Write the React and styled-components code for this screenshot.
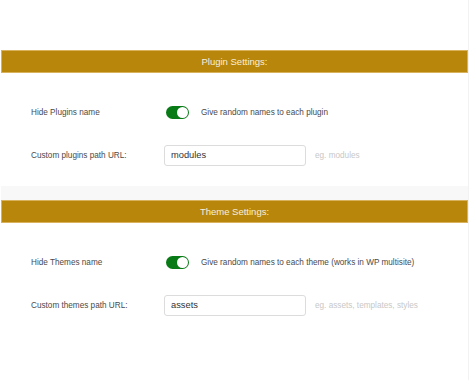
import styled, { createGlobalStyle } from "styled-components";

const GlobalStyle = createGlobalStyle`
  body {
    margin: 0;
    background: #fff;
    font-family: "Liberation Sans", Arial, sans-serif;
  }
`;

const Page = styled.div`
  box-sizing: border-box;
  width: 469px;
  height: 380px;
  padding: 50px 0 0 1px;
  border-right: 1px solid #f2f2f2;
  overflow: hidden;
`;

const SectionHeader = styled.div`
  height: 21px;
  display: flex;
  align-items: center;
  justify-content: center;
  background: #b8860b;
  border: 1px solid #d8b25c;
  color: #f6efdc;
  font-size: 9.5px;
`;

const Panel = styled.div`
  display: flex;
  flex-direction: column;
  gap: 21px;
  padding: 28px 0 20px 30px;
`;

const Row = styled.div`
  display: grid;
  grid-template-columns: 133px auto;
  align-items: center;
  min-height: 22px;
`;

const Label = styled.span`
  color: #4a4a4a;
  font-size: 8.2px;
`;

const Control = styled.div`
  display: flex;
  align-items: center;
  gap: ${(p) => p.$gap || 12}px;
`;

const Toggle = styled.span`
  position: relative;
  display: inline-block;
  width: 23px;
  height: 13px;
  margin-left: 2px;
  border-radius: 7px;
  background: ${(p) => (p.$on ? "#087a16" : "#ccc")};

  &::after {
    content: "";
    position: absolute;
    top: 1px;
    left: ${(p) => (p.$on ? "11px" : "1px")};
    width: 11px;
    height: 11px;
    border-radius: 50%;
    background: #fff;
  }
`;

const ToggleText = styled.span`
  color: #4a4a4a;
  font-size: 8.2px;
`;

const TextInput = styled.input`
  box-sizing: border-box;
  width: 142px;
  height: 21px;
  padding: 0 6px;
  border: 1px solid #dcdcdc;
  border-radius: 3px;
  background: #fff;
  color: #333;
  font-family: "Liberation Sans", Arial, sans-serif;
  font-size: 9.3px;
  outline: none;
`;

const Hint = styled.span`
  color: #c8c8c8;
  font-size: 8.2px;
`;

const Divider = styled.div`
  height: 14px;
  background: #f8f8f8;
`;

const Section = ({ title, toggleLabel, toggleText, pathLabel, value, hint }) => (
  <>
    <SectionHeader>{title}</SectionHeader>
    <Panel>
      <Row>
        <Label>{toggleLabel}</Label>
        <Control>
          <Toggle $on />
          <ToggleText>{toggleText}</ToggleText>
        </Control>
      </Row>
      <Row>
        <Label>{pathLabel}</Label>
        <Control $gap={9}>
          <TextInput defaultValue={value} />
          <Hint>{hint}</Hint>
        </Control>
      </Row>
    </Panel>
  </>
);

export default function App() {
  return (
    <Page>
      <GlobalStyle />
      <Section
        title="Plugin Settings:"
        toggleLabel="Hide Plugins name"
        toggleText="Give random names to each plugin"
        pathLabel="Custom plugins path URL:"
        value="modules"
        hint="eg. modules"
      />
      <Divider />
      <Section
        title="Theme Settings:"
        toggleLabel="Hide Themes name"
        toggleText="Give random names to each theme (works in WP multisite)"
        pathLabel="Custom themes path URL:"
        value="assets"
        hint="eg. assets, templates, styles"
      />
    </Page>
  );
}
